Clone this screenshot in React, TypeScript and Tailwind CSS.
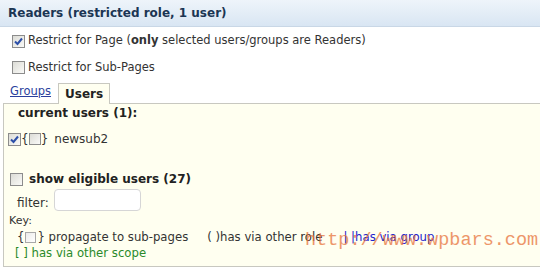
const Box = ({ checked = false, small = false }: { checked?: boolean; small?: boolean }) => (
  <span
    className={`inline-flex items-center justify-center border border-[#8c8c8c] bg-gradient-to-br from-[#dcdcd6] to-[#fafaf8] shrink-0 ${
      small ? 'w-[12px] h-[12px]' : 'w-[13px] h-[13px]'
    }`}
  >
    {checked && (
      <svg width="9" height="9" viewBox="0 0 9 9">
        <path d="M1 4.5 L3.5 7 L8 1.5" fill="none" stroke="#2c4fa8" strokeWidth="2" />
      </svg>
    )}
  </span>
);

export default function App() {
  return (
    <div className="w-[540px] h-[271px] bg-white overflow-hidden relative font-['DejaVu_Sans',Verdana,sans-serif] text-[#333] text-[11.5px]">
      <div className="h-[27px] bg-gradient-to-b from-[#eef4fa] to-[#d9e6f3] border-b border-[#c9d7e6] pl-[8px] flex items-center">
        <span className="font-bold text-[12px] text-[#1b3553]">Readers (restricted role, 1 user)</span>
      </div>
      <div className="pl-[12px] h-[28px] flex items-center gap-[3px]">
        <Box checked />
        <span>
          Restrict for Page (<b>only</b> selected users/groups are Readers)
        </span>
      </div>
      <div className="pl-[12px] h-[24px] pt-[1px] flex items-center gap-[3px]">
        <Box />
        <span>Restrict for Sub-Pages</span>
      </div>
      <div className="flex items-end h-[24px] pl-[10px]">
        <span className="text-[#2a3f9d] underline mb-[3px]">Groups</span>
        <span className="ml-[7px] h-[21px] px-[6px] border border-b-0 border-[#c8c8c0] bg-[#fffff0] font-bold text-[12px] text-[#222] flex items-center relative top-[1px]">
          Users
        </span>
      </div>
      <div className="ml-[3px] h-[164px] border-l border-t border-b border-[#c8c8c0] bg-[#fffff0]">
        <div className="pl-[14px] pt-[1px] leading-[16px] font-bold text-[12px] text-[#222]">current users (1):</div>
        <div className="pl-[4px] mt-[10px] h-[16px] flex items-center text-[12px]">
          <Box checked />
          <span>{'{'}</span>
          <Box small />
          <span>{'}'}</span>
          <span className="ml-[6px]">newsub2</span>
        </div>
        <div className="pl-[6px] mt-[24px] h-[16px] flex items-center gap-[6px]">
          <Box />
          <span className="font-bold text-[12px] text-[#222]">show eligible users (27)</span>
        </div>
        <div className="pl-[13px] mt-[2px] flex items-end gap-[5px]">
          <span className="text-[12px] leading-[14px] mb-[1px]">filter:</span>
          <span className="w-[87px] h-[22px] border border-[#d6d6d6] rounded-[4px] bg-white" />
        </div>
        <div className="pl-[5px] mt-[3px] text-[11px] leading-[14px]">Key:</div>
        <div className="pl-[13px] mt-[2px] h-[14px] flex items-center text-[11.7px] leading-[14px]">
          <span>{'{'}</span>
          <span className="w-[11px] h-[11px] mx-[1px] border border-[#a8a8a8] bg-gradient-to-br from-[#ececea] to-white shrink-0" />
          <span>{'}'} propagate to sub-pages</span>
          <span className="ml-[19px]">( )has via other role</span>
          <span className="ml-[21px] text-[#2222cc]">| |has via group</span>
        </div>
        <div className="pl-[11px] mt-[2px] text-[11.7px] leading-[14px] text-[#2a8a2a]">[ ] has via other scope</div>
      </div>
      <div className="absolute left-[305px] top-[227px] font-['Liberation_Mono',monospace] text-[18.5px] text-[#e8743c] opacity-75 pointer-events-none">
        http://www.wpbars.com
      </div>
    </div>
  );
}
